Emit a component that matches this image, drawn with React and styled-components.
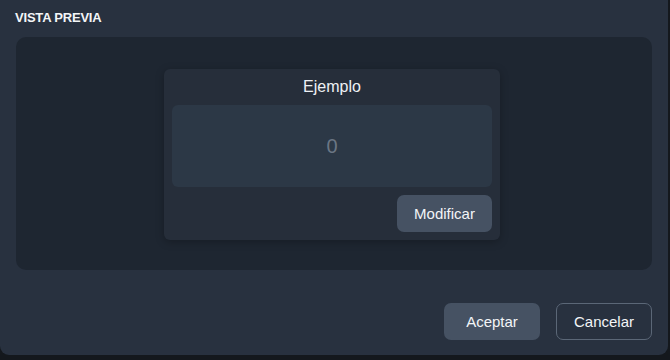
import React, { useState } from 'react';
import styled, { createGlobalStyle } from 'styled-components';

const GlobalStyle = createGlobalStyle`
  html, body {
    margin: 0;
    padding: 0;
    background-color: #14181d;
    font-family: 'Liberation Sans', Arial, sans-serif;
  }
`;

const App = () => {
  const [value, setValue] = useState(0);

  return (
    <>
      <GlobalStyle />
      <Dialog>
        <SectionTitle>VISTA PREVIA</SectionTitle>
        <PreviewArea>
          <Card>
            <CardTitle>Ejemplo</CardTitle>
            <ValueBox>{value}</ValueBox>
            <CardActions>
              <SolidButton small onClick={() => setValue(value)}>
                Modificar
              </SolidButton>
            </CardActions>
          </Card>
        </PreviewArea>
        <Footer>
          <SolidButton>Aceptar</SolidButton>
          <OutlineButton>Cancelar</OutlineButton>
        </Footer>
      </Dialog>
    </>
  );
};

export default App;

const Dialog = styled.div`
  display: flex;
  flex-direction: column;
  width: 668px;
  height: 355px;
  box-sizing: border-box;
  padding: 0 16px;
  background-color: #28313f;
  border-radius: 0 0 9px 9px;
`;

const SectionTitle = styled.div`
  height: 37px;
  display: flex;
  align-items: center;
  margin-left: -1px;
  padding-bottom: 2px;
  box-sizing: border-box;
  color: #f3f5f7;
  font-size: 13px;
  font-weight: 700;
  letter-spacing: -0.2px;
`;

const PreviewArea = styled.div`
  display: flex;
  justify-content: center;
  align-items: flex-start;
  height: 233px;
  padding: 32px 4px 0 0;
  box-sizing: border-box;
  background-color: #1e2631;
  border-radius: 10px;
`;

const Card = styled.div`
  display: flex;
  flex-direction: column;
  width: 336px;
  padding: 0 8px 8px;
  box-sizing: border-box;
  background-color: #262e3a;
  border-radius: 6px;
  box-shadow: 0 2px 8px rgba(0, 0, 0, 0.25);
`;

const CardTitle = styled.div`
  height: 36px;
  display: flex;
  align-items: center;
  justify-content: center;
  color: #eef1f4;
  font-size: 16px;
`;

const ValueBox = styled.div`
  height: 82px;
  display: flex;
  align-items: center;
  justify-content: center;
  background-color: #2c3846;
  border-radius: 6px;
  color: #6b7684;
  font-size: 20px;
`;

const CardActions = styled.div`
  display: flex;
  justify-content: flex-end;
  margin-top: 8px;
`;

const SolidButton = styled.button`
  width: ${props => (props.small ? '95px' : '96px')};
  height: 37px;
  padding: 0;
  border: none;
  border-radius: 7px;
  background-color: #465263;
  color: #f3f5f7;
  font-family: 'Liberation Sans', Arial, sans-serif;
  font-size: 15px;
  cursor: pointer;
`;

const OutlineButton = styled(SolidButton)`
  border: 1px solid #5b6777;
  background-color: transparent;
`;

const Footer = styled.div`
  display: flex;
  justify-content: flex-end;
  gap: 16px;
  margin-top: 33px;
`;
